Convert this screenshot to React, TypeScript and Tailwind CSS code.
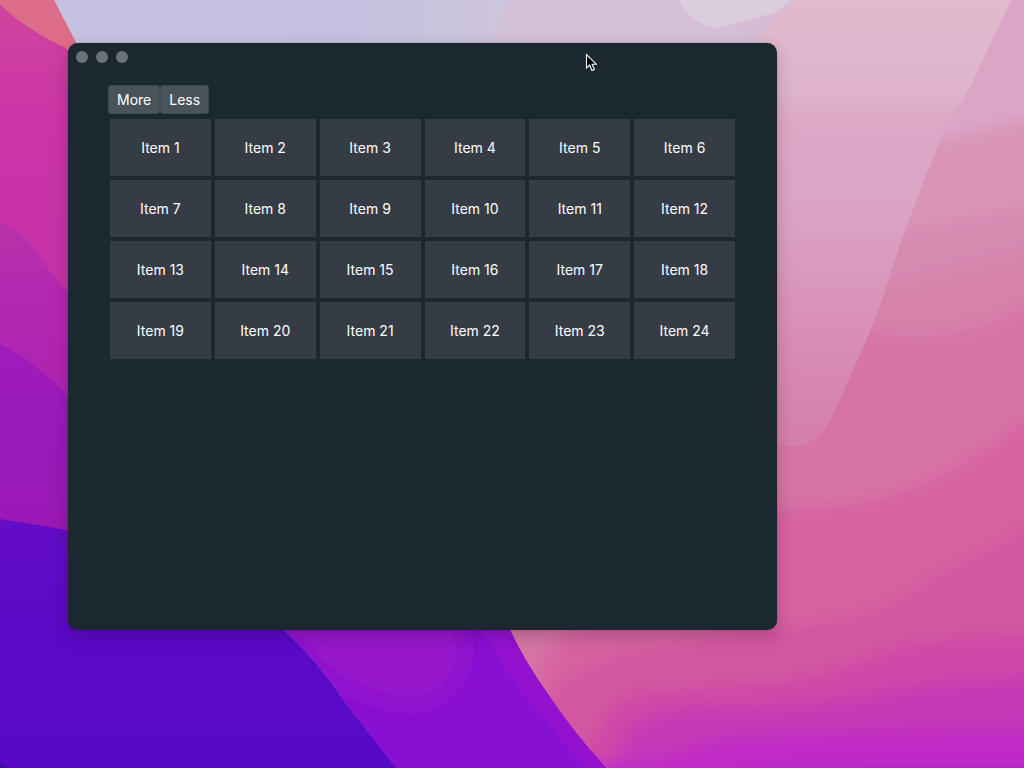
import React, { useState } from "react";

function Wallpaper() {
  return (
    <svg
      className="absolute inset-0 h-full w-full"
      viewBox="0 0 1024 768"
      preserveAspectRatio="none"
      aria-hidden="true"
    >
      <defs>
        <filter id="soft" x="-10%" y="-10%" width="120%" height="120%">
          <feGaussianBlur stdDeviation="8" />
        </filter>
        <filter id="glow" x="-30%" y="-30%" width="160%" height="160%">
          <feGaussianBlur stdDeviation="14" />
        </filter>
        <linearGradient id="sky" x1="54" x2="790" y1="0" y2="0" gradientUnits="userSpaceOnUse">
          <stop offset="0" stopColor="#c5c2e0" />
          <stop offset="0.4" stopColor="#c5c0df" />
          <stop offset="0.6" stopColor="#ccc5db" />
          <stop offset="0.66" stopColor="#d2c1d7" />
          <stop offset="1" stopColor="#d5bfd5" />
        </linearGradient>
        <linearGradient id="petal" x1="0" x2="0" y1="0" y2="446" gradientUnits="userSpaceOnUse">
          <stop offset="0" stopColor="#e1bacd" />
          <stop offset="0.2" stopColor="#dfb4cc" />
          <stop offset="0.28" stopColor="#dca8c6" />
          <stop offset="0.45" stopColor="#dba5c6" />
          <stop offset="0.67" stopColor="#d994b9" />
          <stop offset="0.9" stopColor="#d684ae" />
          <stop offset="1" stopColor="#d57fab" />
        </linearGradient>
        <linearGradient id="magenta" x1="0" x2="0" y1="0" y2="240" gradientUnits="userSpaceOnUse">
          <stop offset="0" stopColor="#d0469d" />
          <stop offset="0.45" stopColor="#cc35a6" />
          <stop offset="1" stopColor="#c832a8" />
        </linearGradient>
        <linearGradient id="orchid" x1="0" x2="0" y1="222" y2="400" gradientUnits="userSpaceOnUse">
          <stop offset="0" stopColor="#b733a8" />
          <stop offset="0.4" stopColor="#b428b0" />
          <stop offset="1" stopColor="#ae24b0" />
        </linearGradient>
        <linearGradient id="violet" x1="0" x2="0" y1="344" y2="530" gradientUnits="userSpaceOnUse">
          <stop offset="0" stopColor="#a01bbc" />
          <stop offset="0.5" stopColor="#981bba" />
          <stop offset="1" stopColor="#9b18b5" />
        </linearGradient>
        <linearGradient id="indigo" x1="0" x2="0" y1="519" y2="768" gradientUnits="userSpaceOnUse">
          <stop offset="0" stopColor="#640cc6" />
          <stop offset="0.5" stopColor="#5a09c7" />
          <stop offset="1" stopColor="#5809c8" />
        </linearGradient>
        <clipPath id="purpleArea">
          <path d="M260 600H495L510 630Q525 662 548 694Q570 728 606 768H394Q370 735 345 702Q317 660 284 630Z" />
        </clipPath>
      </defs>

      <rect width="1024" height="768" fill="#dba6c6" />
      <g filter="url(#soft)">
        <path d="M700 150L940 140L1060 110V820H500V150Z" fill="#d995b8" />
        <path d="M700 235L903 230L1060 200V820H500Z" fill="#d68ab0" />
        <path d="M700 290L890 288L1060 245V820H500Z" fill="#d682aa" />
        <path d="M700 325L870 330Q970 350 1060 285V820H480V600Z" fill="#d675a5" />
        <path d="M540 660L700 505Q870 520 960 463Q1010 435 1060 390V840H540Z" fill="#d664a0" />
        <path d="M535 720L560 685Q600 655 640 650L777 625Q870 625 930 578L1060 510V840H535Z" fill="#d356a0" />
        <path d="M570 765L600 735Q605 700 650 692L780 683Q840 672 890 650Q950 635 1060 638V840H570Z" fill="#cf47a8" />
        <path d="M600 775L622 750Q622 720 690 710Q820 710 880 695Q930 682 1060 678V840H590Z" fill="#c637b6" />
        <path d="M590 765L670 757Q700 738 780 735L1060 727V840H590Z" fill="#c02bc6" />
        <path d="M740 775Q850 760 1060 766V840H740Z" fill="#b825ce" />
      </g>
      <path
        d="M700 0H1011L970 87Q954 114 940 140Q924 180 908 222Q894 262 882 300Q874 324 862 350L840 400L825 430Q818 439 800 446L700 448Z"
        fill="url(#petal)"
      />
      <path d="M54 0H793Q788 8 775 15Q764 28 755 45H77Z" fill="url(#sky)" />
      <path d="M508 0Q503 25 487 43H757L774 16L790 0Z" fill="#d6bed6" opacity="0.6" />
      <path d="M678 0Q690 23 715 28Q752 20 775 12L792 0Z" fill="#dacedc" />

      <path d="M0 0H54L80 50V80H0Z" fill="#dd6c88" />
      <path d="M0 4Q25 30 80 55V310H0Z" fill="url(#magenta)" />
      <path d="M0 222Q28 234 45 264Q60 286 80 303V410H0Z" fill="url(#orchid)" />
      <path d="M0 344Q35 360 80 408V540H0Z" fill="url(#violet)" />
      <g clipPath="url(#purpleArea)">
        <rect x="250" y="600" width="370" height="168" fill="#8810d2" />
        <path
          d="M260 600H430Q490 640 450 690Q420 725 330 680Z"
          fill="#9816ca"
          filter="url(#glow)"
        />
        <path d="M483 630Q500 668 535 708L585 768H606L548 694L510 630Z" fill="#9312d0" />
      </g>
      <path d="M0 519L80 532V600H260L284 630Q317 660 345 702Q370 735 396 768H0Z" fill="url(#indigo)" />
      <path d="M0 763L9 768H0Z" fill="#4108a8" />
    </svg>
  );
}

function Pointer() {
  return (
    <svg
      className="pointer-events-none absolute top-[10px] left-[517px] h-[20px] w-[13px]"
      viewBox="0 0 13 20"
      aria-hidden="true"
    >
      <path
        d="M1.5 1.5V15L4.7 12L7 17.5L9.4 16.5L7.1 11.2H11.2Z"
        fill="#000"
        stroke="#fff"
        strokeWidth="1.1"
      />
    </svg>
  );
}

const buttonClass =
  "h-[29px] rounded-[3px] border border-[#3f4a51] bg-[#48545a] px-2 text-sm leading-5 text-white hover:bg-[#536067]";

export default function App() {
  const [count, setCount] = useState(24);
  const items = Array.from({ length: count }, (_, i) => i + 1);

  return (
    <div className="relative flex min-h-screen overflow-hidden pt-[43px] pr-[247px] pb-[138px] pl-[68px] font-['Inter',sans-serif]">
      <Wallpaper />
      <main className="relative flex-1 rounded-[10px] bg-[#1c2830] shadow-[0_0_1px_rgba(0,0,0,0.6),0_6px_18px_rgba(0,0,0,0.2)]">
        <header className="flex gap-2 px-2 pt-2">
          <span className="size-3 rounded-full bg-[#6c7077]" />
          <span className="size-3 rounded-full bg-[#6c7077]" />
          <span className="size-3 rounded-full bg-[#6c7077]" />
        </header>
        <div className="px-[42px] pt-[22px] pb-10">
          <div className="-mx-0.5 flex">
            <button type="button" className={buttonClass} onClick={() => setCount((c) => c + 1)}>
              More
            </button>
            <button
              type="button"
              className={buttonClass}
              onClick={() => setCount((c) => Math.max(0, c - 1))}
            >
              Less
            </button>
          </div>
          <ul className="mt-[5px] grid grid-cols-6 gap-1">
            {items.map((n) => (
              <li
                key={n}
                className="flex h-[57px] items-center justify-center bg-[#353c45] text-sm text-white"
              >
                Item {n}
              </li>
            ))}
          </ul>
        </div>
        <Pointer />
      </main>
    </div>
  );
}
